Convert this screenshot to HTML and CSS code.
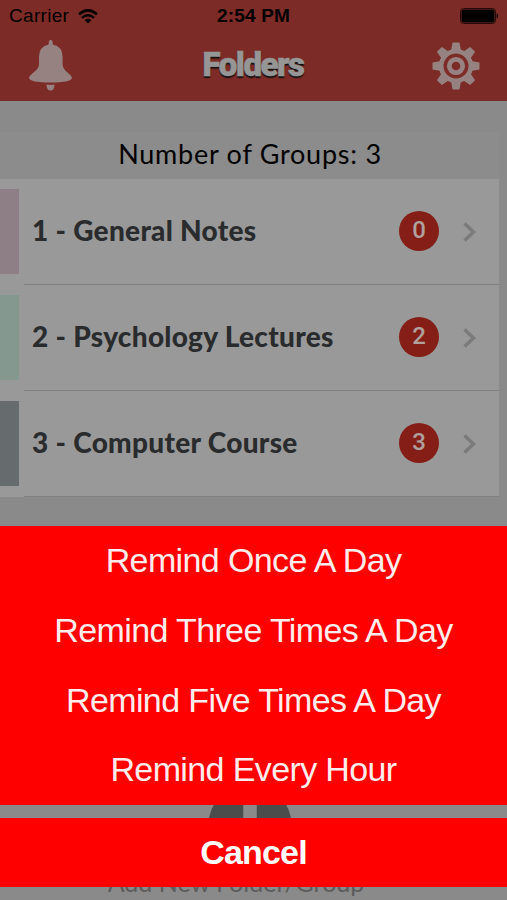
FILE: index.html
```html
<!DOCTYPE html>
<html lang="en">
<head>
<meta charset="utf-8">
<title>Folders</title>
<link rel="stylesheet" href="styles.css">
</head>
<body>
<div class="screen">
  <header class="header">
    <div class="status">
      <div class="carrier"><span class="carrier-name">Carrier</span>
        <svg class="wifi" width="20" height="15" viewBox="0 0 20 15" fill="none" stroke="#000" stroke-width="2.5"><path d="M1 5.3Q10-2.5 19 5.3M4 8.9Q10 3.7 16 8.9"/><path d="M6.7 11.3Q10 8.4 13.3 11.3L10 14.6Z" fill="#000" stroke="none"/></svg>
      </div>
      <span class="time">2:54 PM</span>
      <svg class="battery" width="39" height="16" viewBox="0 0 39 16"><rect x=".5" y=".5" width="35" height="15" rx="3" fill="none" stroke="#260b09"/><rect x="1.500" y="1.500" width="33" height="13" rx="2"/><path d="M36.700 5.300q3 2.700 0 5.400z"/></svg>
    </div>
    <div class="nav">
      <svg class="bell" width="44" height="52" viewBox="0 0 44 52" fill="#968281"><path d="M19.700 3.200Q19.700 0 21.700 0T23.700 3.200V4.500Q33.600 6.500 33.600 17V24Q33.600 28.500 38 32Q43 36 43 38Q42 42.500 21.500 42.500T0 38Q0 36 5 32Q10 28.500 10 24V17Q10 6.500 19.700 4.500Z"/><path d="M17.500 44.500Q21.500 45.300 25.500 44.500Q25.500 50.500 21.500 50.500T17.500 44.500Z"/></svg>
      <h1 class="title">Folders</h1>
      <svg class="gear" width="48" height="48" viewBox="-24 -24 48 48" fill="#968281"><g><path id="t" d="M-5-15L-3.500-23.500H3.500L5-15Z"/><use href="#t" transform="rotate(45)"/><use href="#t" transform="rotate(90)"/><use href="#t" transform="rotate(135)"/><use href="#t" transform="rotate(180)"/><use href="#t" transform="rotate(225)"/><use href="#t" transform="rotate(270)"/><use href="#t" transform="rotate(315)"/></g><circle r="14.800" fill="none" stroke="#968281" stroke-width="4.600"/><circle r="6.700" fill="none" stroke="#968281" stroke-width="4.800"/></svg>
    </div>
  </header>
  <main class="groups">
    <h2 class="count">Number of Groups: 3</h2>
    <div class="row"><i class="swatch pink"></i><div class="cell"><span class="name">1 - General Notes</span><b class="badge">0</b><svg class="chevron" width="14" height="20" viewBox="0 0 14 20"><path d="M1.500 1.500L10.500 10L1.500 18.500"/></svg></div></div>
    <div class="row"><i class="swatch green"></i><div class="cell"><span class="name">2 - Psychology Lectures</span><b class="badge">2</b><svg class="chevron" width="14" height="20" viewBox="0 0 14 20"><path d="M1.500 1.500L10.500 10L1.500 18.500"/></svg></div></div>
    <div class="row"><i class="swatch slate"></i><div class="cell"><span class="name">3 - Computer Course</span><b class="badge">3</b><svg class="chevron" width="14" height="20" viewBox="0 0 14 20"><path d="M1.500 1.500L10.500 10L1.500 18.500"/></svg></div></div>
  </main>
  <footer class="add">
    <svg width="84" height="84" viewBox="0 0 84 84"><circle cx="42" cy="42" r="41.500" fill="#4b4d4c"/><path d="M42 15V69M15 42H69" stroke="#8a8a8a" stroke-width="13.500"/></svg>
    <span class="add-label">Add New Folder/Group</span>
  </footer>
  <div class="sheet">
    <div class="options">
      <div class="option">Remind Once A Day</div>
      <div class="option">Remind Three Times A Day</div>
      <div class="option">Remind Five Times A Day</div>
      <div class="option">Remind Every Hour</div>
    </div>
    <div class="cancel">Cancel</div>
  </div>
</div>
</body>
</html>
```
FILE: styles.css
```css
* { box-sizing: border-box; }
body { margin: 0; }
.screen { position: relative; width: 507px; height: 900px; overflow: hidden; background: #8a8a8a; font-family: "Liberation Sans", sans-serif; display: flex; flex-direction: column; }
.header { height: 101px; flex: none; background: #7c2b26; }
.status { height: 32px; display: grid; grid-template-columns: 1fr auto 1fr; align-items: center; padding: 0 9px; color: #000; }
.carrier { display: flex; gap: 9px; align-items: center; font-size: 19px; letter-spacing: .3px; }
.time { font-size: 19px; font-weight: 700; letter-spacing: .2px; }
.battery { justify-self: end; margin-right: -1px; }
.nav { height: 68px; display: flex; justify-content: space-between; align-items: center; padding: 0 27px 0 29px; }
.title { margin: 0 0 2px 1px; font: 900 33px/40px Roboto, sans-serif; letter-spacing: -1.5px; color: #969696; -webkit-text-stroke: .6px #969696; text-shadow: 0 1.5px 1px #111; }
.groups { width: 499px; padding-top: 31px; flex: none; }
.count { margin: 0; height: 47px; padding-left: 1px; text-align: center; font: 400 27px/44px Lato, sans-serif; letter-spacing: .75px; color: #000; background: #8c8c8c; }
.row { height: 106px; display: flex; align-items: stretch; background: #999; }
.swatch { width: 19px; height: 85px; margin: 10px 5px 0 0; }
.pink { background: #8e7f86; }
.green { background: #84988f; }
.slate { background: #666b6e; }
.cell { flex: 1; display: flex; align-items: center; border-bottom: 1px solid #7f8080; padding: 0 22px 0 8px; }
.name { flex: 1; white-space: nowrap; font: 900 28px/34px Lato, sans-serif; letter-spacing: .3px; padding-bottom: 4px; color: #292b2d; }
.badge { width: 40px; height: 40px; margin: -2px 24px 0 0; border-radius: 50%; background: #841e17; color: #b0a09e; text-align: center; font: 500 24px/39px Roboto, sans-serif; }
.chevron path { fill: none; stroke: #7b7b7b; stroke-width: 3.5; }
.add { margin-top: auto; height: 118px; flex: none; display: flex; flex-direction: column; align-items: center; padding-right: 7px; }
.add svg { flex: none; margin-top: 1px; }
.add-label { padding-right: 28px; margin-top: 0; font: 400 25px/30px Lato, sans-serif; color: #5c5c5c; white-space: nowrap; }
.sheet { position: absolute; left: 0; right: 0; bottom: 13px; color: #ffecec; text-align: center; }
.options { background: #f00; height: 279px; display: grid; grid-template-rows: repeat(4, 1fr); }
.option { font-size: 34px; line-height: 69px; letter-spacing: -.62px; }
.cancel { margin-top: 13px; height: 69px; background: #f00; color: #fff; font-size: 34px; font-weight: 700; line-height: 69px; letter-spacing: -.8px; }
```
